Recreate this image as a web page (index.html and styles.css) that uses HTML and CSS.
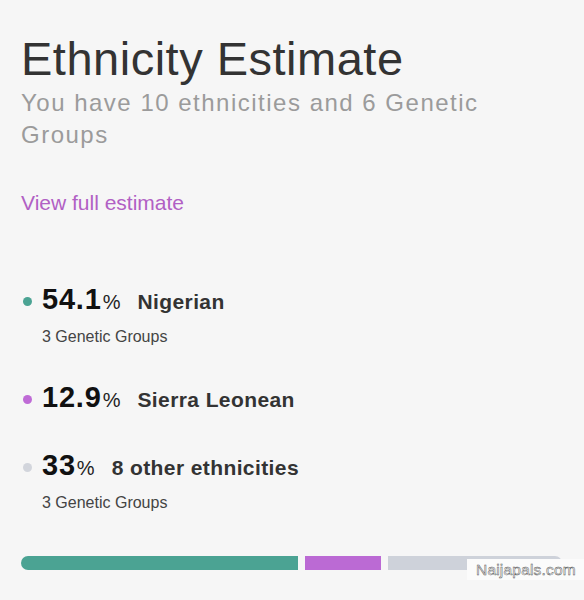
FILE: index.html
```html
<!DOCTYPE html>
<html lang="en">
<head>
<meta charset="utf-8">
<title>Ethnicity Estimate</title>
<link rel="stylesheet" href="styles.css">
</head>
<body>
<main class="card">
  <h1 class="title">Ethnicity Estimate</h1>
  <p class="subtitle">You have 10 ethnicities and 6 Genetic Groups</p>
  <a class="link" href="#">View full estimate</a>

  <ul class="list">
    <li class="item">
      <div class="row"><span class="dot dot-teal"></span><span class="num">54.1</span><span class="pct">%</span><span class="name">Nigerian</span></div>
      <div class="sub">3 Genetic Groups</div>
    </li>
    <li class="item">
      <div class="row"><span class="dot dot-purple"></span><span class="num">12.9</span><span class="pct">%</span><span class="name">Sierra Leonean</span></div>
    </li>
    <li class="item">
      <div class="row"><span class="dot dot-gray"></span><span class="num">33</span><span class="pct">%</span><span class="name">8 other ethnicities</span></div>
      <div class="sub">3 Genetic Groups</div>
    </li>
  </ul>

  <div class="bar">
    <span class="seg seg-teal" style="flex-grow:277"></span>
    <span class="seg seg-purple" style="flex-grow:76"></span>
    <span class="seg seg-gray" style="flex-grow:174"></span>
  </div>
</main>
<div class="watermark">Naijapals.com</div>
</body>
</html>
```

FILE: styles.css
```css
html, body {
  margin: 0;
  padding: 0;
  background: #f6f6f6;
}
body {
  font-family: "Liberation Sans", Arial, sans-serif;
  width: 584px;
  height: 600px;
  overflow: hidden;
  position: relative;
}
.card {
  padding: 31px 22px 0 21px;
}
.title {
  margin: 0;
  font-size: 47px;
  line-height: 56px;
  font-weight: normal;
  letter-spacing: 0.5px;
  color: #333333;
}
.subtitle {
  margin: 0;
  font-size: 24px;
  line-height: 32px;
  letter-spacing: 1.5px;
  color: #9b9b9b;
  width: 480px;
}
.link {
  display: block;
  margin-top: 40px;
  font-size: 21px;
  line-height: 24px;
  color: #b160c4;
  text-decoration: none;
}
.list {
  list-style: none;
  margin: 66px 0 0 0;
  padding: 0;
  display: flex;
  flex-direction: column;
  gap: 32px;
}
.row {
  font-size: 29px;
  line-height: 36px;
  white-space: nowrap;
}
.dot {
  display: inline-block;
  width: 9px;
  height: 9px;
  border-radius: 50%;
  margin: 0 10px 0 2px;
  vertical-align: middle;
}
.dot-teal { background: #4ba393; }
.dot-purple { background: #bf6bd6; }
.dot-gray { background: #d2d5dc; }
.num {
  font-weight: bold;
  letter-spacing: 0.8px;
  color: #111111;
}
.pct {
  font-size: 20px;
  line-height: 1;
  color: #222222;
  margin-right: 17px;
  margin-left: 1px;
}
.name {
  font-size: 21px;
  line-height: 1;
  font-weight: bold;
  letter-spacing: 0.4px;
  color: #333333;
}
.sub {
  margin: 10px 0 0 21px;
  font-size: 16px;
  line-height: 20px;
  color: #444444;
}
.bar {
  display: flex;
  gap: 7px;
  height: 14px;
  margin-top: 43px;
  border-radius: 7px;
  overflow: hidden;
}
.seg {
  display: block;
  flex-basis: 0;
  height: 100%;
}
.seg-teal { background: #4ba393; }
.seg-purple { background: #bb6ad4; }
.seg-gray { background: #ced2da; }
.watermark {
  position: absolute;
  left: 467px;
  top: 559px;
  width: 117px;
  height: 21px;
  box-sizing: border-box;
  padding-left: 9px;
  background: #fbfbfb;
  font-size: 15.5px;
  line-height: 21px;
  letter-spacing: 0.2px;
  color: #ffffff;
  -webkit-text-stroke: 0.5px #555555;
}
```
